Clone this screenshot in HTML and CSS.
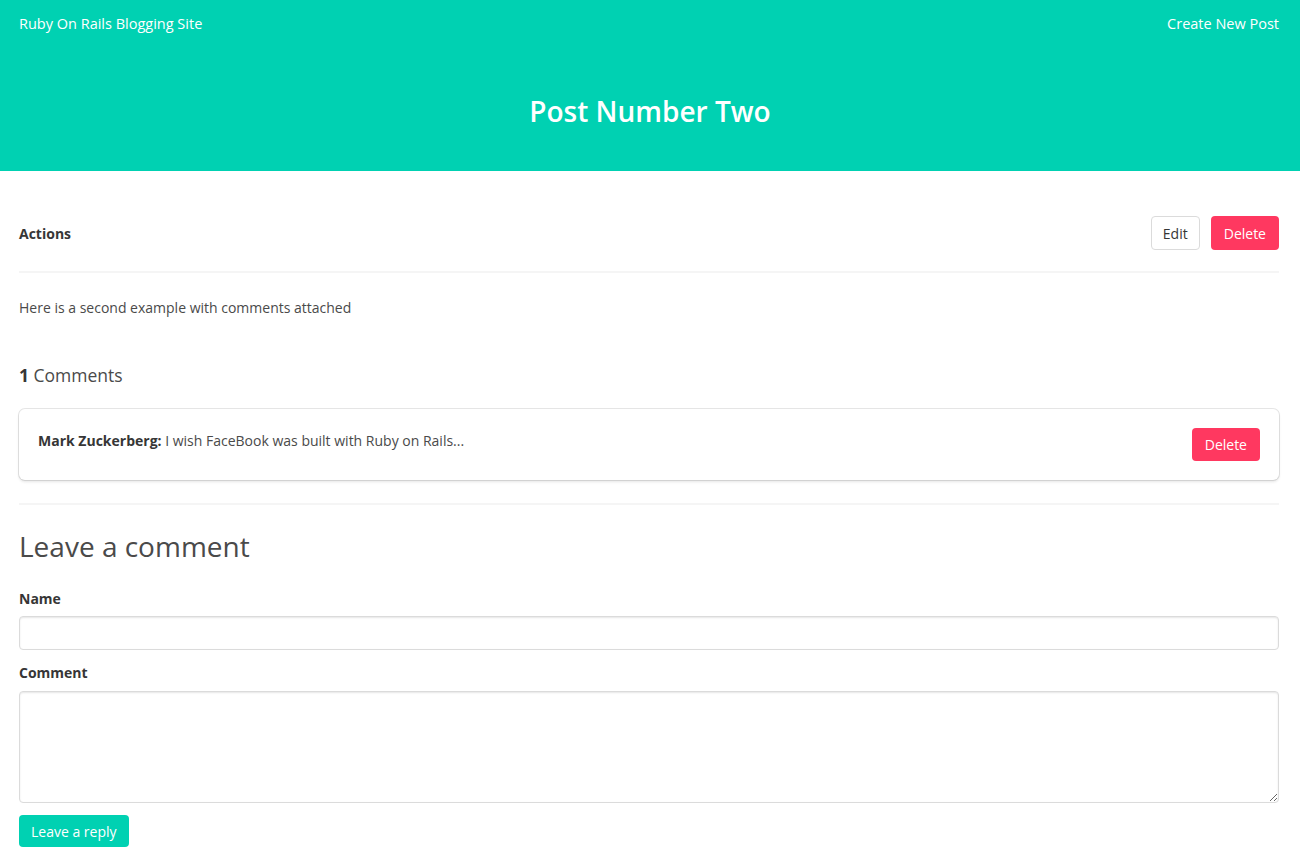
FILE: index.html
```html
<!DOCTYPE html>
<html lang="en">
<head>
<meta charset="utf-8">
<title>Post Number Two</title>
<link rel="stylesheet" href="styles.css">
</head>
<body>
<header class="hero">
  <nav class="navbar">
    <a class="brand" href="#">Ruby On Rails Blogging Site</a>
    <a class="nav-link" href="#">Create New Post</a>
  </nav>
  <h1 class="hero-title">Post Number Two</h1>
</header>
<main class="container">
  <div class="actions-row">
    <strong class="actions-label">Actions</strong>
    <div class="buttons">
      <a class="btn btn-light" href="#">Edit</a>
      <a class="btn btn-danger" href="#">Delete</a>
    </div>
  </div>
  <hr class="divider">
  <p class="post-body">Here is a second example with comments attached</p>
  <h2 class="comments-count"><strong>1</strong> Comments</h2>
  <div class="box">
    <p class="comment-text"><strong>Mark Zuckerberg:</strong> I wish FaceBook was built with Ruby on Rails...</p>
    <a class="btn btn-danger" href="#">Delete</a>
  </div>
  <hr class="divider divider-2">
  <h3 class="form-title">Leave a comment</h3>
  <form class="comment-form">
    <label class="label" for="name">Name</label>
    <input class="input" id="name" type="text">
    <label class="label" for="comment">Comment</label>
    <textarea class="textarea" id="comment"></textarea>
    <button class="btn btn-primary" type="button">Leave a reply</button>
  </form>
</main>
</body>
</html>
```
FILE: styles.css
```css
* { box-sizing: border-box; }
html, body { margin: 0; padding: 0; }
body {
  font-family: "Open Sans", "Noto Sans", sans-serif;
  color: #4a4a4a;
  background: #fff;
  font-size: 14px;
}
a { text-decoration: none; }

.hero {
  background: #00d1b2;
  height: 171px;
  color: #fff;
}
.navbar {
  display: flex;
  justify-content: space-between;
  padding: 12px 21px 0 19px;
  font-size: 14.5px;
  line-height: 24px;
}
.navbar a { color: #fff; }
.hero-title {
  margin: 0;
  padding-top: 55px;
  text-align: center;
  font-size: 28px;
  font-weight: 600;
  line-height: 40px;
}

.container { padding: 0 21px 0 19px; }
.actions-row {
  display: flex;
  justify-content: space-between;
  align-items: center;
  padding-top: 45px;
}
.actions-label { color: #363636; font-size: 14px; font-weight: 700; }
.buttons { display: flex; gap: 11px; }

.btn {
  display: inline-flex;
  align-items: center;
  justify-content: center;
  height: 34px;
  padding: 0 11px;
  border-radius: 4px;
  border: 1px solid transparent;
  font-family: inherit;
  font-size: 14px;
  cursor: pointer;
}
.btn-light { background: #fff; border-color: #dbdbdb; color: #363636; }
.btn-danger { background: #ff3860; color: #fff; padding: 0 12px; }
.btn-primary { background: #00d1b2; color: #fff; height: 32px; font-size: 14px; }

.divider {
  border: none;
  height: 2px;
  background: #f5f5f5;
  margin: 21px 0 0;
}
.post-body { margin: 24px 0 0; line-height: 21px; font-size: 14px; }
.comments-count {
  margin: 44px 0 0;
  font-size: 17.5px;
  font-weight: 400;
  line-height: 26px;
}
.comments-count strong { color: #363636; }

.box {
  margin-top: 21px;
  display: flex;
  justify-content: space-between;
  align-items: flex-start;
  padding: 19px;
  border-radius: 6px;
  box-shadow: 0 2px 3px rgba(10,10,10,.1), 0 0 0 1px rgba(10,10,10,.1);
  height: 71px;
}
.box .btn { height: 33px; }
.comment-text { margin: 3px 0 0; line-height: 20px; }
.comment-text strong { color: #363636; }

.divider-2 { margin-top: 23px; }
.form-title {
  margin: 21px 0 11px;
  font-size: 28px;
  font-weight: 400;
  line-height: 40px;
}
.comment-form { display: flex; flex-direction: column; align-items: flex-start; }
.label {
  color: #363636;
  font-weight: 700;
  font-size: 14px;
  line-height: 20px;
  margin-top: 12px;
  margin-bottom: 7px;
}
.label[for="comment"] { margin-top: 13px; margin-bottom: 8px; }
.input, .textarea {
  width: 100%;
  border: 1px solid #dbdbdb;
  border-radius: 4px;
  box-shadow: inset 0 1px 2px rgba(10,10,10,.1);
  font-family: inherit;
  font-size: 14px;
  background: #fff;
}
.input { height: 34px; }
.textarea { height: 112px; resize: vertical; }
.btn-primary { margin-top: 12px; }
```
